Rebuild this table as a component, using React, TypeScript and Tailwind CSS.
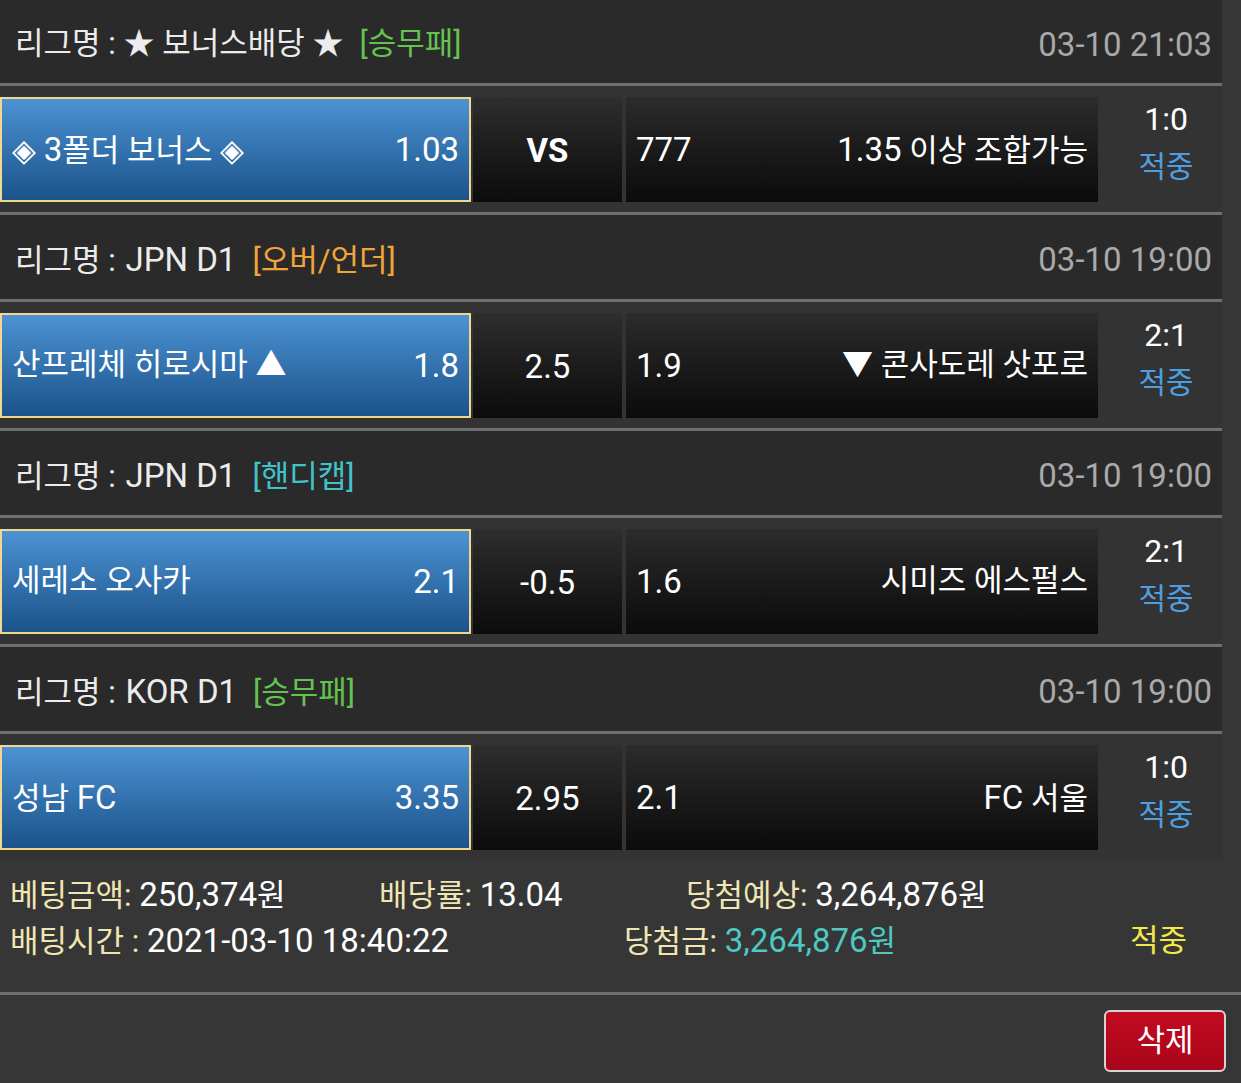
import React from "react";

type Match = {
  league: string;
  leagueLatin?: boolean;
  tag: string;
  tagColor: string;
  date: string;
  home: React.ReactNode;
  homeOdd: string;
  mid: string;
  midBold?: boolean;
  awayOdd: string;
  away: React.ReactNode;
  score: string;
};

const matches: Match[] = [
  {
    league: "★ 보너스배당 ★",
    tag: "[승무패]",
    tagColor: "text-[#64c350]",
    date: "03-10 21:03",
    home: (
      <>
        ◈ <span className="text-[33px]">3</span>폴더 보너스 ◈
      </>
    ),
    homeOdd: "1.03",
    mid: "VS",
    midBold: true,
    awayOdd: "777",
    away: (
      <>
        <span className="text-[33px]">1.35</span> 이상 조합가능
      </>
    ),
    score: "1:0",
  },
  {
    league: "JPN D1",
    leagueLatin: true,
    tag: "[오버/언더]",
    tagColor: "text-[#f2a43a]",
    date: "03-10 19:00",
    home: "산프레체 히로시마 ▲",
    homeOdd: "1.8",
    mid: "2.5",
    awayOdd: "1.9",
    away: "▼ 콘사도레 삿포로",
    score: "2:1",
  },
  {
    league: "JPN D1",
    leagueLatin: true,
    tag: "[핸디캡]",
    tagColor: "text-[#42c3ca]",
    date: "03-10 19:00",
    home: "세레소 오사카",
    homeOdd: "2.1",
    mid: "-0.5",
    awayOdd: "1.6",
    away: "시미즈 에스펄스",
    score: "2:1",
  },
  {
    league: "KOR D1",
    leagueLatin: true,
    tag: "[승무패]",
    tagColor: "text-[#64c350]",
    date: "03-10 19:00",
    home: (
      <>
        성남 <span className="text-[33px]">FC</span>
      </>
    ),
    homeOdd: "3.35",
    mid: "2.95",
    awayOdd: "2.1",
    away: (
      <>
        <span className="text-[33px]">FC</span> 서울
      </>
    ),
    score: "1:0",
  },
];

function Sep() {
  return <div className="h-[3px] bg-[#6f6f6f]" />;
}

function Block({ m, first, last }: { m: Match; first: boolean; last: boolean }) {
  return (
    <div className="w-[1222px]">
      <div
        className={`${first ? "h-[83px]" : "h-[84px]"} bg-[#2a2a2a] flex items-center justify-between pl-[15px] pr-[10px] pt-[6px]`}
      >
        <div className="text-[31px] text-[#ececec] whitespace-nowrap">
          <span>리그명 : </span>
          <span className={m.leagueLatin ? "text-[33px] ml-[2px]" : ""}>{m.league}</span>
          <span className={`ml-[16px] ${m.tagColor}`}>{m.tag}</span>
        </div>
        <div className="text-[33px] text-[#a9a9a9] whitespace-nowrap">{m.date}</div>
      </div>
      <Sep />
      <div className="h-[126px] bg-[#333333] flex items-start pt-[11px]">
        <div className="w-[471px] h-[105px] border-2 border-[#f0d88e] bg-gradient-to-b from-[#4c93d4] to-[#1b538a] flex items-center justify-between pl-[10px] pr-[10px] text-white">
          <span className="text-[31px] whitespace-nowrap">{m.home}</span>
          <span className="text-[33px]">{m.homeOdd}</span>
        </div>
        <div className="ml-[2px] w-[149px] h-[105px] bg-gradient-to-b from-[#2e2e2e] to-[#0c0c0c] flex items-center justify-center pt-[3px]">
          <span className={`text-[33px] text-white ${m.midBold ? "font-bold" : ""}`}>{m.mid}</span>
        </div>
        <div className="ml-[4px] w-[472px] h-[105px] bg-gradient-to-b from-[#2c2c2c] to-[#0b0b0b] flex items-center justify-between pl-[10px] pr-[10px] text-white">
          <span className="text-[33px]">{m.awayOdd}</span>
          <span className="text-[31px] whitespace-nowrap">{m.away}</span>
        </div>
        <div className="flex-1 h-[105px] flex flex-col items-center justify-center pl-[12px] pb-[14px] leading-[47px]">
          <span className="text-[32px] text-white">{m.score}</span>
          <span className="text-[30px] text-[#4d9fe2]">적중</span>
        </div>
      </div>
      {!last && <Sep />}
    </div>
  );
}

export default function App() {
  return (
    <div className="min-h-[1083px] w-full bg-[#363636] font-[family-name:Roboto,'Noto_Sans_CJK_KR','Noto_Sans',sans-serif] overflow-hidden">
      {matches.map((m, i) => (
        <Block key={i} m={m} first={i === 0} last={i === matches.length - 1} />
      ))}
      <div className="h-[132px] pt-[12px] pl-[10px] text-[31px] leading-[45px] whitespace-nowrap">
        <div className="flex">
          <div className="w-[369px]">
            <span className="text-[#efe6b4]">베팅금액: </span>
            <span className="text-white text-[33px]">250,374</span>
            <span className="text-white">원</span>
          </div>
          <div className="w-[307px]">
            <span className="text-[#efe6b4]">배당률: </span>
            <span className="text-white text-[33px]">13.04</span>
          </div>
          <div>
            <span className="text-[#efe6b4]">당첨예상: </span>
            <span className="text-white text-[33px]">3,264,876</span>
            <span className="text-white">원</span>
          </div>
        </div>
        <div className="flex">
          <div className="w-[614px]">
            <span className="text-[#efe6b4]">배팅시간 : </span>
            <span className="text-white text-[33px]">2021-03-10 18:40:22</span>
          </div>
          <div className="w-[506px]">
            <span className="text-[#efe6b4]">당첨금: </span>
            <span className="text-[#4ec8c2] text-[33px]">3,264,876</span>
            <span className="text-[#4ec8c2]">원</span>
          </div>
          <div className="text-[#f2e84a]">적중</div>
        </div>
      </div>
      <Sep />
      <div className="flex justify-end pt-[15px] pr-[15px]">
        <button className="w-[122px] h-[62px] rounded-[6px] border-2 border-[#d9d2d2] bg-gradient-to-b from-[#c20a20] to-[#a8061a] text-white text-[31px] flex items-center justify-center">
          삭제
        </button>
      </div>
    </div>
  );
}
